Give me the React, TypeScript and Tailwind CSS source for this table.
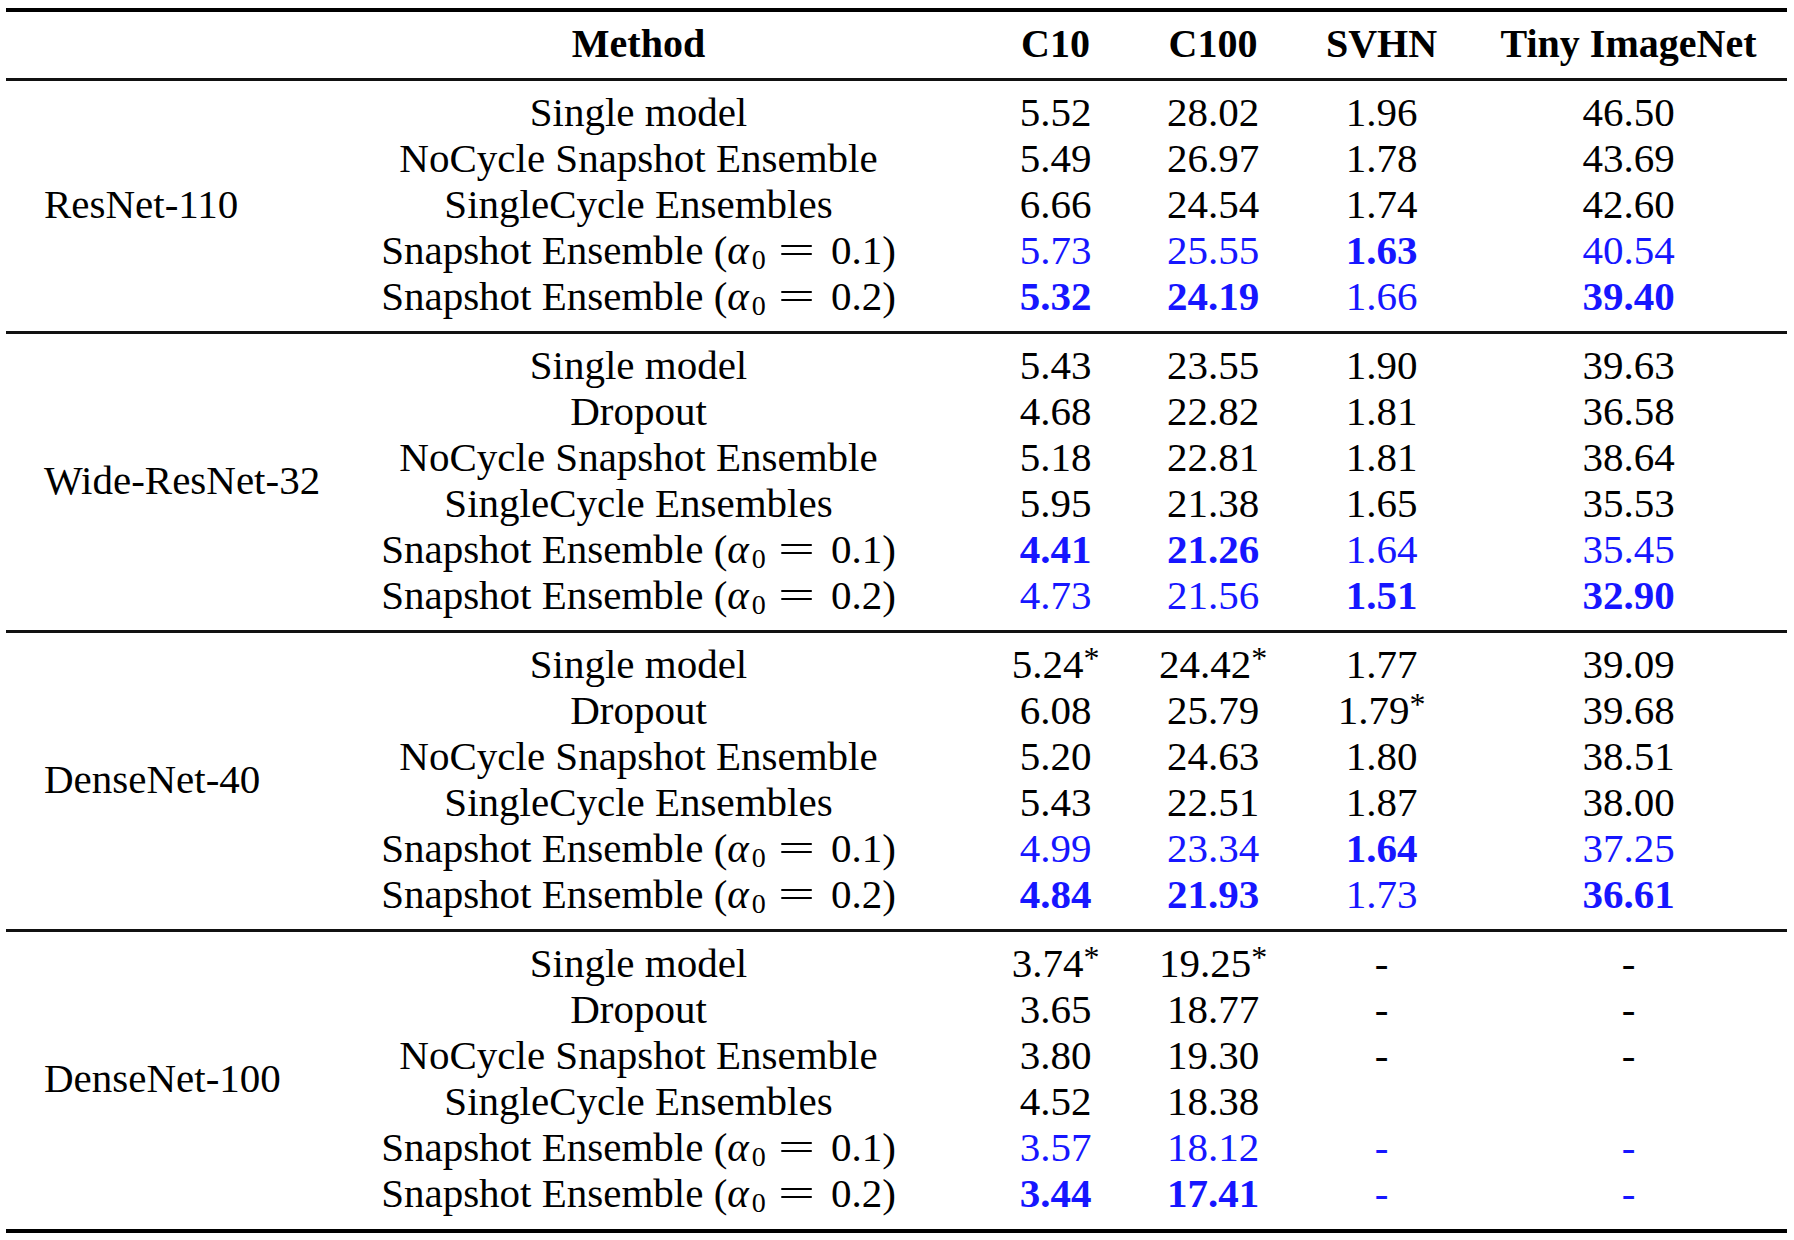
type Row = {
  method: string;
  alpha?: string;
  blue?: boolean;
  cells: string[];
};

type Section = {
  name: string;
  rows: Row[];
};

// cell syntax: "**x" = bold, "x*" = starred, "" = empty
const sections: Section[] = [
  {
    name: "ResNet-110",
    rows: [
      { method: "Single model", cells: ["5.52", "28.02", "1.96", "46.50"] },
      { method: "NoCycle Snapshot Ensemble", cells: ["5.49", "26.97", "1.78", "43.69"] },
      { method: "SingleCycle Ensembles", cells: ["6.66", "24.54", "1.74", "42.60"] },
      { method: "Snapshot Ensemble", alpha: "0.1", blue: true, cells: ["5.73", "25.55", "**1.63", "40.54"] },
      { method: "Snapshot Ensemble", alpha: "0.2", blue: true, cells: ["**5.32", "**24.19", "1.66", "**39.40"] },
    ],
  },
  {
    name: "Wide-ResNet-32",
    rows: [
      { method: "Single model", cells: ["5.43", "23.55", "1.90", "39.63"] },
      { method: "Dropout", cells: ["4.68", "22.82", "1.81", "36.58"] },
      { method: "NoCycle Snapshot Ensemble", cells: ["5.18", "22.81", "1.81", "38.64"] },
      { method: "SingleCycle Ensembles", cells: ["5.95", "21.38", "1.65", "35.53"] },
      { method: "Snapshot Ensemble", alpha: "0.1", blue: true, cells: ["**4.41", "**21.26", "1.64", "35.45"] },
      { method: "Snapshot Ensemble", alpha: "0.2", blue: true, cells: ["4.73", "21.56", "**1.51", "**32.90"] },
    ],
  },
  {
    name: "DenseNet-40",
    rows: [
      { method: "Single model", cells: ["5.24*", "24.42*", "1.77", "39.09"] },
      { method: "Dropout", cells: ["6.08", "25.79", "1.79*", "39.68"] },
      { method: "NoCycle Snapshot Ensemble", cells: ["5.20", "24.63", "1.80", "38.51"] },
      { method: "SingleCycle Ensembles", cells: ["5.43", "22.51", "1.87", "38.00"] },
      { method: "Snapshot Ensemble", alpha: "0.1", blue: true, cells: ["4.99", "23.34", "**1.64", "37.25"] },
      { method: "Snapshot Ensemble", alpha: "0.2", blue: true, cells: ["**4.84", "**21.93", "1.73", "**36.61"] },
    ],
  },
  {
    name: "DenseNet-100",
    rows: [
      { method: "Single model", cells: ["3.74*", "19.25*", "-", "-"] },
      { method: "Dropout", cells: ["3.65", "18.77", "-", "-"] },
      { method: "NoCycle Snapshot Ensemble", cells: ["3.80", "19.30", "-", "-"] },
      { method: "SingleCycle Ensembles", cells: ["4.52", "18.38", "", ""] },
      { method: "Snapshot Ensemble", alpha: "0.1", blue: true, cells: ["3.57", "18.12", "-", "-"] },
      { method: "Snapshot Ensemble", alpha: "0.2", blue: true, cells: ["**3.44", "**17.41", "-", "-"] },
    ],
  },
];

const cols = "grid grid-cols-[649px_185px_130px_207px_287px]";

function Cell({ value, blue }: { value: string; blue?: boolean }) {
  if (!value) return <div />;
  const bold = value.startsWith("**");
  let text = bold ? value.slice(2) : value;
  const star = text.endsWith("*");
  if (star) text = text.slice(0, -1);
  return (
    <div className={`${bold ? "font-bold" : ""} ${blue ? "text-[#1616ff]" : ""}`}>
      {text}
      {star && <sup className="text-[32px] top-[-9px] font-normal">*</sup>}
    </div>
  );
}

function Method({ row }: { row: Row }) {
  if (!row.alpha) return <div>{row.method}</div>;
  return (
    <div>
      {row.method} (<span className="italic pr-[3px]">α</span>
      <sub className="text-[28px] bottom-[-5px]">0</sub>
      <span className="inline-block scale-x-[1.6] ml-[19px] mr-[23px]">=</span>
      {row.alpha})
    </div>
  );
}

export default function App() {
  return (
    <main className="min-h-screen bg-white text-black font-['Liberation_Serif',serif] text-[41px] leading-[46px]">
      <div className="ml-[6px] w-[1781px] pt-[8px]">
        <div className="h-[4px] bg-black" />

        <div className="flex h-[66px] items-center font-bold text-[40px] pb-[2px]">
          <div className="w-[308px]" />
          <div className={`${cols} text-center`}>
            <div>Method</div>
            <div>C10</div>
            <div>C100</div>
            <div>SVHN</div>
            <div>Tiny ImageNet</div>
          </div>
        </div>

        {sections.map((s, i) => (
          <div key={s.name}>
            <div className="h-[3px] bg-[#111]" />
            <div className={`flex pt-[8px] ${i === sections.length - 1 ? "pb-[13px]" : "pb-[12px]"}`}>
              <div className="w-[308px] flex items-center pl-[38px] whitespace-nowrap">{s.name}</div>
              <div className="flex flex-col">
                {s.rows.map((r, j) => (
                  <div key={j} className={`${cols} h-[46px] items-center text-center whitespace-nowrap`}>
                    <Method row={r} />
                    {r.cells.map((c, k) => (
                      <Cell key={k} value={c} blue={r.blue} />
                    ))}
                  </div>
                ))}
              </div>
            </div>
          </div>
        ))}

        <div className="h-[4px] bg-black" />
      </div>
    </main>
  );
}
